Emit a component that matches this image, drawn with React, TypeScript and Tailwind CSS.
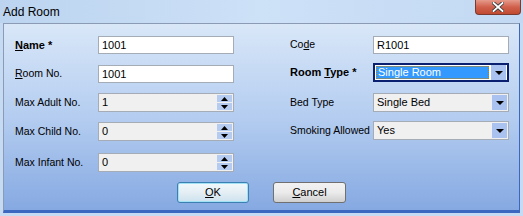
import type { ReactNode } from 'react';

const font = { fontFamily: '"Liberation Sans", Arial, sans-serif' };

function Label({ children, bold }: { children: ReactNode; bold?: boolean }) {
  return (
    <div className={`flex h-[18px] w-[83px] shrink-0 items-center text-black ${bold ? 'font-bold text-[11px]' : 'text-[10.5px]'}`}>
      {children}
    </div>
  );
}

function TextBox({ value }: { value: string }) {
  return (
    <div className="flex h-[18px] w-[136px] items-center border border-[#a5acb5] bg-white px-[3px] text-[11px] text-black">
      {value}
    </div>
  );
}

function Spinner({ value }: { value: string }) {
  return (
    <div className="flex h-[19px] w-[136px] items-center border border-[#a5acb5] bg-[#f0f0f0] pl-[3px] text-[11px] text-black">
      <span className="flex-1">{value}</span>
      <div className="mr-[1px] flex h-full flex-col justify-center gap-[1px] py-[1px]">
        <div className="flex h-[7px] w-[15px] items-center justify-center bg-[#b5cbef]">
          <svg width="7" height="4" viewBox="0 0 7 4">
            <path d="M3.5 0 L7 4 L0 4 Z" fill="#000" />
          </svg>
        </div>
        <div className="flex h-[7px] w-[15px] items-center justify-center bg-[#b5cbef]">
          <svg width="7" height="4" viewBox="0 0 7 4">
            <path d="M0 0 L7 0 L3.5 4 Z" fill="#000" />
          </svg>
        </div>
      </div>
    </div>
  );
}

function Combo({ value, focused }: { value: string; focused?: boolean }) {
  return (
    <div
      className={`flex h-[19px] w-[136px] items-center text-[11px] ${
        focused ? 'border-2 border-[#0b1f70] bg-white' : 'border border-[#a5acb5] bg-[#f0f0f0]'
      }`}
    >
      {focused ? (
        <div className="ml-[1px] flex h-[13px] flex-1 items-center border border-dotted border-[#c08000] bg-[#3399ff] pl-[1px] text-white">
          {value}
        </div>
      ) : (
        <span className="flex-1 pl-[3px] text-black">{value}</span>
      )}
      <div className="ml-[2px] mr-[1px] flex h-[15px] w-[15px] items-center justify-center bg-[#a9c2ef]">
        <svg width="8" height="4" viewBox="0 0 8 4">
          <path d="M0 0 L8 0 L4 4 Z" fill="#000" />
        </svg>
      </div>
    </div>
  );
}

export default function App() {
  return (
    <div className="flex h-[216px] w-[523px] flex-col overflow-hidden bg-[#c5daf3]" style={font}>
      <div className="relative flex h-[23px] shrink-0 items-start bg-gradient-to-r from-[#bcd4f0] via-[#cde1f7] to-[#c3d9f3]">
        <span className="pl-[3px] pt-[3px] text-[12px] text-black">Add Room</span>
        <div className="absolute right-[2px] top-0 flex h-[15px] w-[46px] items-center justify-center rounded-b-[4px] border border-t-0 border-[#7a3a30] bg-gradient-to-b from-[#e59a8b] via-[#d0604c] to-[#c04a30]">
          <svg width="12" height="10" viewBox="0 0 12 10">
            <path d="M1.5 1 L10.5 9 M10.5 1 L1.5 9" stroke="#3a3a3a" strokeWidth="3.6" strokeLinecap="square" />
            <path d="M1.5 1 L10.5 9 M10.5 1 L1.5 9" stroke="#ffffff" strokeWidth="1.8" strokeLinecap="square" />
          </svg>
        </div>
      </div>
      <div className="mx-[3px] flex flex-1 flex-col border border-b-[3px] border-[#8a9bb3] border-b-[#3b67c0] border-r-[#3b67c0] bg-gradient-to-b from-[#d9e7f8] via-[#b4cdf0] to-[#86a9e2]">
        <div className="flex">
          <div className="ml-[11px] flex flex-col">
            <div className="mt-[12px] flex">
              <Label bold>
                <span><span className="underline">N</span>ame *</span>
              </Label>
              <TextBox value="1001" />
            </div>
            <div className="mt-[11px] flex">
              <Label>
                <span><span className="underline">R</span>oom No.</span>
              </Label>
              <TextBox value="1001" />
            </div>
            <div className="mt-[10px] flex items-center">
              <Label>Max Adult No.</Label>
              <Spinner value="1" />
            </div>
            <div className="mt-[10px] flex items-center">
              <Label>Max Child No.</Label>
              <Spinner value="0" />
            </div>
            <div className="mt-[12px] flex items-center">
              <Label>Max Infant No.</Label>
              <Spinner value="0" />
            </div>
          </div>
          <div className="ml-[56px] flex flex-col">
            <div className="mt-[12px] flex">
              <Label>
                <span>Co<span className="underline">d</span>e</span>
              </Label>
              <TextBox value="R1001" />
            </div>
            <div className="mt-[9px] flex items-center">
              <Label bold>
                <span>Room <span className="underline">T</span>ype *</span>
              </Label>
              <Combo value="Single Room" focused />
            </div>
            <div className="mt-[11px] flex items-center">
              <Label>Bed Type</Label>
              <Combo value="Single Bed" />
            </div>
            <div className="mt-[9px] flex items-center">
              <Label>Smoking Allowed</Label>
              <Combo value="Yes" />
            </div>
          </div>
        </div>
        <div className="mt-[10px] flex justify-center gap-[24px]">
          <button className="flex h-[21px] w-[72px] items-center justify-center rounded-[3px] border border-[#3c7fb1] bg-gradient-to-b from-[#f2f9fc] via-[#e4eef4] to-[#cde2ee] text-[11px] text-black shadow-[inset_0_0_0_1px_#9fe2f5]">
            <span><span className="underline">O</span>K</span>
          </button>
          <button className="flex h-[21px] w-[73px] items-center justify-center rounded-[3px] border border-[#707070] bg-gradient-to-b from-[#f2f2f2] via-[#ebebeb] to-[#cfcfcf] text-[11px] text-black">
            <span><span className="underline">C</span>ancel</span>
          </button>
        </div>
      </div>
      <div className="h-[3px] shrink-0" />
    </div>
  );
}
